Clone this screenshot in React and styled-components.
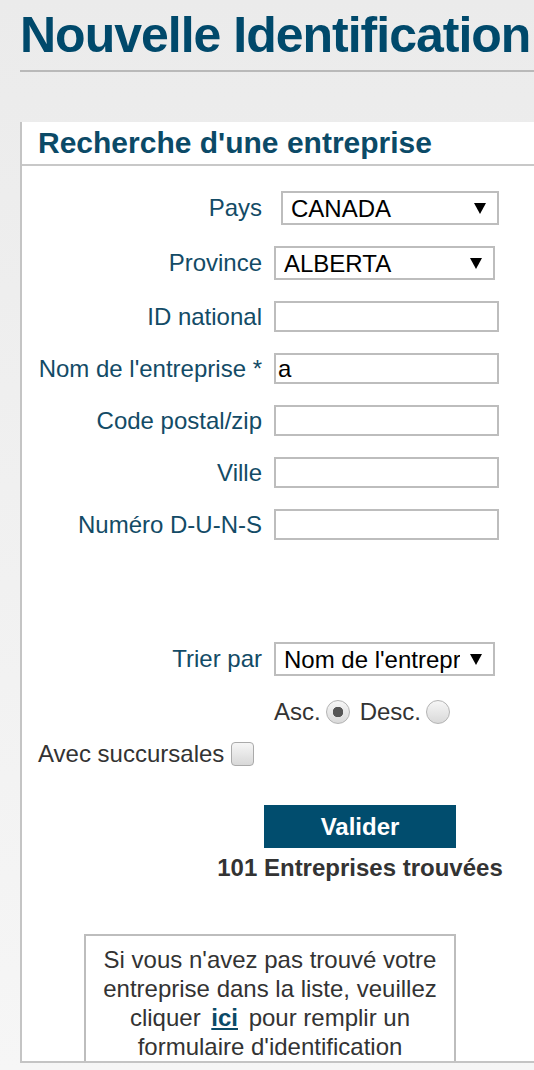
import React from 'react';
import styled, { createGlobalStyle } from 'styled-components';

const GlobalStyle = createGlobalStyle`
  html, body {
    margin: 0;
    padding: 0;
  }
  body {
    font-family: "Liberation Sans", Arial, sans-serif;
    background: linear-gradient(#ebebeb, #f6f6f6);
    min-height: 1070px;
    overflow: hidden;
  }
`;

const fields = [
  { label: 'Pays', kind: 'select', value: 'CANADA', width: 218, offset: 7 },
  { label: 'Province', kind: 'select', value: 'ALBERTA', width: 221 },
  { label: 'ID national' },
  { label: "Nom de l'entreprise *", value: 'a' },
  { label: 'Code postal/zip' },
  { label: 'Ville' },
  { label: 'Numéro D-U-N-S' },
];

const Field = ({ field }) => {
  if (field.kind === 'select') {
    return (
      <SelectWrap $width={field.width} $offset={field.offset || 0}>
        <Select defaultValue={field.value}>
          <option>{field.value}</option>
        </Select>
        <Arrow />
      </SelectWrap>
    );
  }
  return <TextInput type="text" value={field.value || ''} readOnly />;
};

const App = () => {
  return (
    <Page>
      <GlobalStyle />
      <TitleBar>
        <Title>Nouvelle Identification</Title>
      </TitleBar>

      <Panel>
        <PanelHeader>Recherche d'une entreprise</PanelHeader>
        <PanelBody>
          <FieldList>
            {fields.map((f) => (
              <Row key={f.label}>
                <Label>{f.label}</Label>
                <Field field={f} />
              </Row>
            ))}
          </FieldList>

          <SortRow>
            <Label>Trier par</Label>
            <SelectWrap $width={221} $offset={0}>
              <Select defaultValue="Nom de l'entreprise">
                <option>Nom de l'entreprise</option>
              </Select>
              <Arrow />
            </SelectWrap>
          </SortRow>

          <OrderRow>
            <span>Asc.</span>
            <Radio type="radio" name="order" defaultChecked />
            <span className="desc">Desc.</span>
            <Radio type="radio" name="order" />
          </OrderRow>

          <BranchRow>
            <span>Avec succursales</span>
            <Checkbox type="checkbox" />
          </BranchRow>

          <ActionColumn>
            <SubmitButton type="button">Valider</SubmitButton>
            <Count>101 Entreprises trouvées</Count>
          </ActionColumn>

          <Notice>
            Si vous n'avez pas trouvé votre entreprise dans la liste, veuillez
            cliquer <NoticeLink href="#">ici</NoticeLink> pour remplir un
            formulaire d'identification
          </Notice>
        </PanelBody>
      </Panel>
    </Page>
  );
};

const Page = styled.div`
  display: flex;
  flex-direction: column;
  padding-left: 20px;
`;

const TitleBar = styled.header`
  padding: 6px 0 6px;
  border-bottom: 2px solid #b9b9b9;
`;

const Title = styled.h1`
  margin: 0;
  font-size: 50px;
  line-height: 58px;
  letter-spacing: -1px;
  font-weight: 700;
  color: #00496b;
  white-space: nowrap;
`;

const Panel = styled.section`
  margin-top: 50px;
  height: 941px;
  box-sizing: border-box;
  background: #fff;
  border-left: 2px solid #c4c4c4;
  border-bottom: 2px solid #c4c4c4;
  overflow: hidden;
`;

const PanelHeader = styled.h2`
  margin: 0;
  padding: 4px 0 4px 16px;
  font-size: 30px;
  line-height: 34px;
  font-weight: 700;
  color: #0b4a67;
  border-bottom: 2px solid #c8c8c8;
`;

const PanelBody = styled.div`
  display: flex;
  flex-direction: column;
  padding: 25px 0 0 16px;
  font-size: 24px;
  color: #333;
`;

const FieldList = styled.div`
  display: flex;
  flex-direction: column;
  gap: 21px;
`;

const Row = styled.div`
  display: grid;
  grid-template-columns: 224px auto;
  column-gap: 12px;
  align-items: center;
`;

const SortRow = styled(Row)`
  margin-top: 102px;
`;

const Label = styled.label`
  text-align: right;
  color: #134b66;
  white-space: nowrap;
`;

const SelectWrap = styled.div`
  position: relative;
  width: ${(p) => p.$width}px;
  margin-left: ${(p) => p.$offset}px;
`;

const Select = styled.select`
  appearance: none;
  display: block;
  width: 100%;
  height: 34px;
  box-sizing: border-box;
  margin: 0;
  padding: 0 33px 0 8px;
  border: 2px solid #bdbdbd;
  border-radius: 0;
  background: #fff;
  font-family: inherit;
  font-size: 24px;
  color: #000;
  outline: none;
`;

const Arrow = styled.span`
  position: absolute;
  right: 13px;
  top: 50%;
  margin-top: -5px;
  width: 0;
  height: 0;
  border-left: 6px solid transparent;
  border-right: 6px solid transparent;
  border-top: 11px solid #000;
  pointer-events: none;
`;

const TextInput = styled.input`
  display: block;
  width: 225px;
  height: 31px;
  box-sizing: border-box;
  margin: 0;
  padding: 0 2px;
  border: 2px solid #bdbdbd;
  background: #fff;
  font-family: inherit;
  font-size: 24px;
  color: #000;
  outline: none;
`;

const OrderRow = styled.div`
  display: flex;
  align-items: center;
  gap: 5px;
  margin: 24px 0 0 236px;
  height: 24px;

  .desc {
    margin-left: 5px;
  }
`;

const Radio = styled.input`
  appearance: none;
  width: 24px;
  height: 24px;
  margin: 0;
  border-radius: 50%;
  border: 1px solid #b4b4b4;
  box-sizing: border-box;
  background: linear-gradient(#f6f6f6, #d9d9d9);

  &:checked {
    background: radial-gradient(circle, #555 0 5px, transparent 5.5px),
      linear-gradient(#f6f6f6, #d9d9d9);
  }
`;

const BranchRow = styled.div`
  display: flex;
  align-items: center;
  gap: 7px;
  margin-top: 18px;
  height: 24px;
`;

const Checkbox = styled.input`
  appearance: none;
  width: 23px;
  height: 24px;
  margin: 0;
  border-radius: 4px;
  border: 1px solid #aaa;
  box-sizing: border-box;
  background: linear-gradient(#f6f6f6, #d8d8d8);
`;

const ActionColumn = styled.div`
  display: flex;
  flex-direction: column;
  align-items: center;
  width: 300px;
  margin: 39px 0 0 172px;
`;

const SubmitButton = styled.button`
  width: 192px;
  height: 43px;
  border: none;
  background: #014d6e;
  color: #fff;
  font-family: inherit;
  font-size: 24px;
  font-weight: 700;
  cursor: pointer;
`;

const Count = styled.div`
  margin-top: 6px;
  font-weight: 700;
  line-height: 28px;
  color: #333;
  white-space: nowrap;
`;

const Notice = styled.div`
  width: 372px;
  box-sizing: border-box;
  margin: 52px 0 0 46px;
  padding: 9px 12px 12px;
  border: 2px solid #bdbdbd;
  text-align: center;
  line-height: 29px;
  color: #333;
`;

const NoticeLink = styled.a`
  padding: 0 4px;
  font-weight: 700;
  color: #0b4a67;
  text-decoration: underline;
`;

export default App;
